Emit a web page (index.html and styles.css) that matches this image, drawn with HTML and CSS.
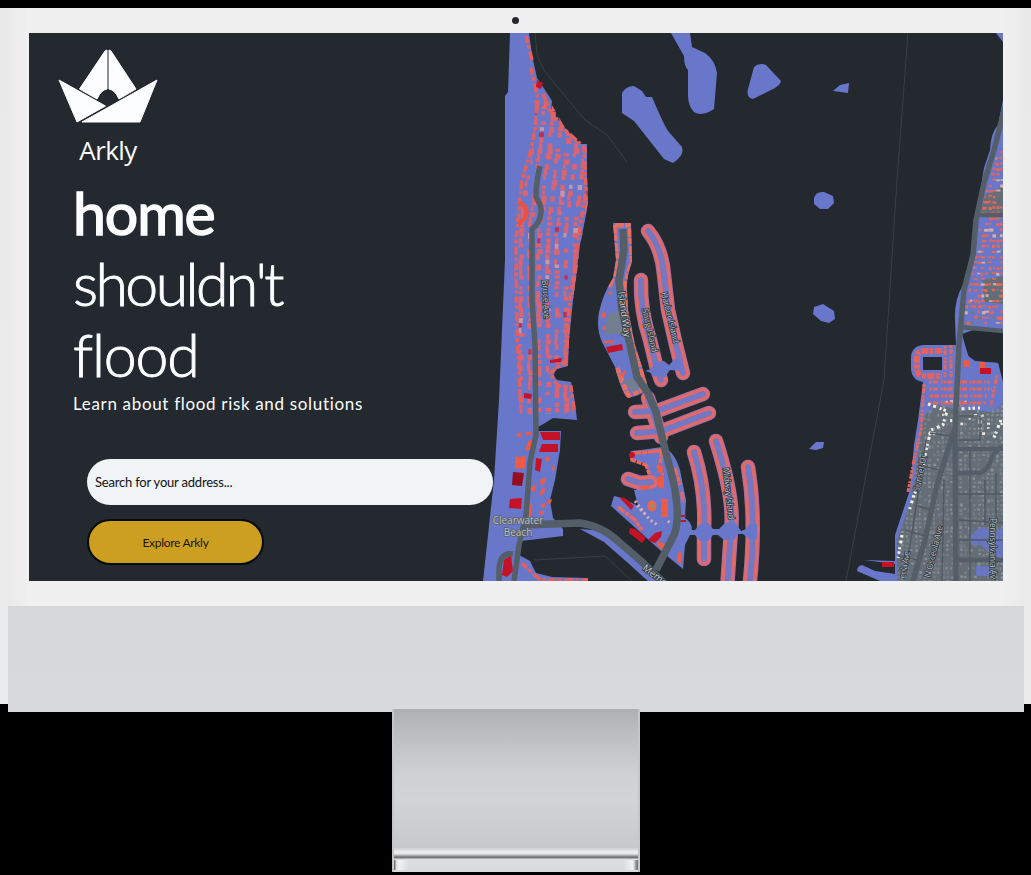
FILE: index.html
```html
<!DOCTYPE html>
<html lang="en">
<head>
<meta charset="utf-8">
<title>Arkly</title>
<link rel="stylesheet" href="styles.css">
</head>
<body>
<main class="desktop">
  <section class="monitor">
    <div class="bezel">
      <span class="camera"></span>
      <div class="screen">
        <svg class="map" viewBox="29 33 974 548" aria-hidden="true">
          <defs>
            <path id="beach" d="M510 33H529L532 55 537 78 545 90 552 101 551 111 565 128 580 144H587V180L588 202 585 220 580 245 573 300 569 340 568 366 557 369Q551 375 557 380L571 382 575 402 577 420 553 418 545 423 538 427V431H561L560 450 555 480 550 500 553 518 563 529V536L521 541 519 555 530 561 536 573 552 577 588 578V581H483L494 480 499 400 502 330 505 260V96L508 92Z"/>
            <path id="town" d="M526 33H529L532 55 537 78 551 103 565 128 580 144H587V180L588 202 583 230 573 300 569 340 567 366 552 370 550 377 556 384 570 385 574 414H520L516 370 514 280 518 205 530 165 535 120 534 80Z"/>
            <path id="isle" d="M613 223H631L632 262 Q626 278 627 290L628 310 635 345 643 370 648 387 Q644 395 628 398Q622 394 615 367L602 342Q596 328 599 312Q603 294 613 278L616 260Z"/>
            <path id="mall" d="M631 451 641 450 662 447Q674 450 680 470L686 500 685 518Q694 524 691 533L685 545 683 569 660 550 611 506 614 496 622 498 638 506 634 490 650 488 650 475 644 463 632 459Z"/>
            <path id="coast" d="M1003 100 998 125 Q991 132 990 150L984 168 978 205 974 235 970 265 963 285 Q954 300 955 320L956 345H942V378L923 382 918 420 914 445 910 490 895 535V561L864 560 895 564V574L875 571 862 565Q857 566 857 571L880 581H1003Z"/>
            <clipPath id="clip-town"><use href="#town"/></clipPath>
            <clipPath id="clip-city"><path d="M958 400H990L1003 405V581H897L898 540 913 494 920 437 928 400Z"/></clipPath>
            <clipPath id="clip-north"><path d="M1003 130 994 165 985 190 978 240 972 275 963 315V326H1003Z"/></clipPath>
            <clipPath id="clip-isle"><use href="#isle"/></clipPath>
            <g id="fingers">
              <path d="M648 231Q662 248 664 275L668 310 676 345 683 373"/>
              <path d="M641 280Q640 310 650 340L656 365 661 380"/>
              <path d="M635 412 657 411 703 394"/>
              <path d="M637 433 662 431 709 413"/>
              <path d="M694 452Q706 490 704 530V559"/>
              <path d="M716 441Q735 500 731 530L727 590"/>
              <path d="M748 467Q757 520 749 590"/>
              <path d="M648 398 661 437"/>
              <path d="M628 479 640 483 651 482"/>
            </g>
          </defs>

          <g class="channel">
            <path d="M535 33 537 55 545 72 585 120 607 135 627 162"/>
            <path d="M908 33 897 180 884 380 846 581"/>
            <path d="M534 560 605 556 632 581"/>
          </g>

          <g class="flood">
            <use href="#beach"/>
            <path d="M671 33H690L692 47 705 53Q715 60 717 73L714 109Q702 117 694 112Q688 106 688 95V70Q684 66 684 56Z"/>
            <path d="M622 93Q626 86 634 86L642 91 646 97H652Q663 123 668 131L682 147Q685 155 673 163L664 159 638 126 634 121 622 113Z"/>
            <path d="M754 67Q759 62 766 65L781 81Q781 84 775 88L753 99Q746 98 748 89Z"/>
            <path d="M833 91 840 85 849 83 848 93Z"/>
            <path d="M814 198Q816 191 824 192L833 196 834 203 828 209H820L814 204Z"/>
            <path d="M814 307 823 304 834 311 835 319 829 323 821 321 813 314Z"/>
            <path d="M809 449 816 442 824 442 823 448 816 450Z"/>
            <path d="M996 33H1003V42Z"/>
            <use href="#isle"/><use href="#mall"/><use href="#coast"/>
            <path d="M580 529 605 531 622 545 650 572 660 583H650L628 563 604 542Z"/>
          </g>

          <g clip-path="url(#clip-town)"><g id="town-homes"></g></g>
          <g class="shore-homes">
            <path d="M526 36 532 60M531 68 537 95 536 125 531 150 522 180 519 210 516 240 517 330 521 410"/>
            <path d="M543 94 550 110 565 130 584 147 586 190 578 240 570 300 566 361 550 373 558 386 571 387 574 410"/>
            <path d="M522 563 532 573 541 580H588"/>
          </g>
          <path class="curve-homes" d="M519 202Q530 208 525 218L519 224"/>

          <g class="severe">
            <path d="M537 80 543 83 541 89 536 87Z"/>
            <path d="M540 432H560V440H543ZM542 444H558V452H539ZM510 499 522 498 521 509 509 508ZM536 458 542 459 540 472 535 470ZM504 560 511 555 513 571 507 577 502 575ZM550 360 562 358 561 362 550 363ZM524 393 532 394 531 399 524 398Z"/>
            <path class="deep" d="M513 472 524 473 522 486 512 485Z"/>
          </g>
          <g class="hot">
            <path d="M515 457 526 456 525 468 515 469ZM528 441 533 440 532 449 525 451ZM517 433H521V437H517ZM526 432H531V435H526ZM530 489 537 483 534 493ZM546 457 549 456V461H546ZM540 480 546 477 545 482 541 486ZM541 489 545 487 544 494 540 496ZM551 464 555 468 553 472ZM528 504 532 503 531 517 528 516ZM541 504 545 503V507L541 508ZM548 500 552 499 551 503 548 504ZM539 512 544 510V514L539 515Z"/>
          </g>

          <use href="#fingers" class="finger-rim"/>
          <use href="#fingers" class="finger-homes"/>
          <use href="#fingers" class="finger-core"/>
          <g class="flood">
            <path d="M645 371 651 369 655 362 664 361 669 365 675 359 681 361 680 371 670 370 665 377 654 376 649 372Z"/>
            <path d="M685 526 691 530H695L700 524 708 523 713 529H719L725 523 735 522 741 531 746 529 749 524H757V539H749L743 534H738L734 540H724L718 535H713L708 541H700L695 535H685Z"/>
          </g>
          <g class="isle-homes" clip-path="url(#clip-isle)">
            <path d="M615 225H630L632 262 624 288 630 330 641 370 646 388 628 396 617 368"/>
            <path d="M614 225 617 265 609 288"/>
          </g>
          <g class="park"><path d="M608 315 620 310 622 334 604 334ZM622 381 635 378 643 385 634 392Z"/></g>
          <g class="hot">
            <path d="M603 313 606 312 604 320ZM601 317 603 311 606 317ZM602 329 605 325 606 330ZM603 341 614 340V343H604ZM607 293 612 291 612 295ZM619 377 626 369 625 375Z"/>
          </g>
          <path class="severe" d="M606 347 622 344 623 350 608 353Z"/>

          <g class="mall-homes">
            <path d="M633 453 650 452 668 449M632 456V460L646 465 650 476"/>
            <path d="M654 451 662 451 660 463M658 465 663 475M675 468 680 485M682 492 683 502M618 507 635 520 642 530"/>
          </g>
          <g class="hot">
            <path d="M661 499H668V517H661ZM658 463 663 467 662 474 658 472ZM657 477 664 475V489L658 487ZM678 553 682 552 681 564 677 561ZM658 541 665 544 662 550 657 545ZM640 487 650 485V489L641 490Z"/>
          </g>
          <g class="severe">
            <path d="M619 497 625 498 634 506 631 510ZM630 528 635 529 646 538 642 543 629 533ZM655 533 662 531 661 537 655 543 648 540ZM679 515H686V517H679ZM679 520H686V522H679Z"/>
            <circle cx="632" cy="455" r="3"/>
          </g>
          <path class="plaza" d="M635 501 649 519 659 526M645 514 637 506M668 521 671 525"/>
          <ellipse class="pond" cx="652" cy="506" rx="3" ry="4"/>

          <g class="land">
            <path d="M923 420 932 403 950 408 990 412 1003 403V581H897V540L912 497Z"/>
            <path d="M1003 186 985 195 980 214H1003ZM983 280 1003 276V304L984 302Z"/>
          </g>
          <g clip-path="url(#clip-city)"><g id="city-homes"></g></g>
          <g clip-path="url(#clip-north)"><g id="north-homes"></g></g>
          <g class="flood">
            <path d="M971 535 980 527 995 531 1003 527V560L990 553 981 545 970 545ZM976 566H993V576H976Z" opacity=".85"/>
            <path d="M926 379H1002V412L990 410 960 395 942 400 928 415 922 400Z" opacity=".5"/>
          </g>
          <path class="sea" d="M962 334 976 329 1003 333V382L998 363 970 361 965 345Z"/>
          <path class="flood" d="M962 345 967 355 975 361 998 363 1003 386V396H960Z"/>
          <g class="finger-rim thin"><path d="M942 351H924Q917 351 917 358V368Q917 376 925 376H942"/></g>
          <g class="finger-homes thin"><path d="M942 351H924Q917 351 917 358V368Q917 376 925 376H942"/></g>
          <g class="rows">
            <path d="M929 382H990M929 389H992M930 396H988M929 403H986"/>
            <path d="M924 384 921 430 914 460 908 492"/>
            <path d="M951 345V377M945 346V377M997 375 991 405"/>
          </g>
          <path class="hot" d="M964 360H970V367H964ZM980 362H985V369H980Z"/>
          <path class="severe" d="M980 368H991V374H980ZM882 562H894V567H882Z"/>
          <path class="white-homes" d="M928 404 947 411 943 425 931 430 926 450 922 475 914 495 909 511M956 409 980 408M980 415V432M902 535 898 558M1001 420 993 440"/>
          <g class="minor-road">
            <path d="M959 416H980V440H959M930 433 950 436M922 466 940 470M959 494H1003M914 505 932 510M905 530 925 536M959 520 1003 523M899 556 918 560M959 540H1003M970 450V581M985 480V525M996 473V520M944 480 942 581M926 440 908 560"/>
          </g>

          <g class="road">
            <path d="M540 166Q536 182 536 197Q542 206 541 213Q540 223 532 229V300L535 345 536 435 530 462 526 515 519 545 514 581"/>
            <path d="M522 525 580 523Q602 526 619 542L641 561 667 586" class="wide"/>
            <path d="M623 229 624 250 619 280 622 310 630 345 637 377 648 393 656 412 664 445 673 480Q681 518 674 535L656 570" class="wide"/>
            <path d="M513 554Q500 552 499 569V583"/>
            <path d="M1005 107 994 150 984 183 976 220 973 255 964 290 959 345 955 430 956 581"/>
            <path d="M954 430 937 485 925 540 912 584"/>
            <path d="M978 215H1003M960 327 1003 331M954 449H1003M956 473H979Q988 471 991 460Q994 450 1003 447M956 560H1003" class="narrow"/>
          </g>

          <g class="labels">
            <text class="label place" x="518" y="524">Clearwater</text>
            <text class="label place" x="518" y="536">Beach</text>
            <text class="label" transform="translate(542 280) rotate(87)" textLength="39">Bruce Ave</text>
            <text class="label large" transform="translate(618 292) rotate(82)" textLength="46">Island Way</text>
            <text class="label" transform="translate(661 293) rotate(76)" textLength="52">Harbor Island</text>
            <text class="label" transform="translate(642 309) rotate(77)" textLength="45">Snug Island</text>
            <text class="label" transform="translate(723 468) rotate(84)" textLength="52">Midway Island</text>
            <text class="label large" transform="translate(642 569) rotate(38)">Memo</text>
            <text class="label" transform="translate(919 492) rotate(-78)" textLength="38">Sunset Dr</text>
            <text class="label" transform="translate(930 578) rotate(-76)" textLength="53">N Osceola Ave</text>
            <text class="label" transform="translate(905 579) rotate(-80)" textLength="28">eola Ave</text>
            <text class="label" transform="translate(990 518) rotate(90)" textLength="61">Pennsylvania Av</text>
          </g>
        </svg>

        <div class="hero">
          <div class="brand">
            <svg class="boat" viewBox="0 0 100 76" aria-hidden="true">
              <g class="sail">
                <path d="M49 2V41Q43 42 39 51L21.500 41 47 3Z"/>
                <path d="M51 2V41Q57 42 61 51L78 41 53 3Z"/>
                <path d="M1 32 47.500 58 19 74Z"/>
                <path d="M99 32 82 74H24Z"/>
              </g>
            </svg>
            <span class="brand-name">Arkly</span>
          </div>
          <h1 class="headline"><b class="strong">home</b><span class="second">shouldn't</span><span class="third">flood</span></h1>
          <p class="tagline">Learn about flood risk and solutions</p>
          <form class="search">
            <input class="address" type="text" placeholder="Search for your address..." aria-label="Address">
            <button class="explore" type="button">Explore Arkly</button>
          </form>
        </div>
      </div>
    </div>
    <div class="chin"></div>
  </section>
  <div class="stand"><div class="neck"></div><div class="foot"></div></div>
</main>
<script src="map.js"></script>
</body>
</html>
```
FILE: styles.css
```css
* { box-sizing: border-box; }
body { margin: 0; background: #000; font-family: Lato, "Open Sans", sans-serif; }
.desktop { width: 1031px; height: 875px; padding-top: 8px; overflow: hidden; display: flex; flex-direction: column; align-items: center; }
.monitor { width: 1031px; height: 704px; flex: none; padding: 0 7px 0 8px; background: linear-gradient(#e9e9e9, #ececec) top / 100% 696px no-repeat; }
.bezel { height: 598px; padding: 0 21px; display: flex; flex-direction: column; align-items: center; background: linear-gradient(90deg, #e9e9e9, #f0f0f0 2%, #f0f0f0 98%, #e9e9e9); }
.camera { width: 7px; height: 7px; margin: 9px 1px 9px 0; border-radius: 50%; background: #22292f; flex: none; }
.screen { width: 974px; height: 548px; flex: none; display: grid; background: #23292f; overflow: hidden; }
.chin { height: 106px; background: linear-gradient(#d5d7d8, #d9dadb); }
.map, .hero { grid-area: 1 / 1; }
.map { width: 974px; height: 548px; display: block; }

.hero { z-index: 1; width: 480px; height: 548px; padding: 15px 0 0 29px; display: flex; flex-direction: column; align-items: flex-start; color: #fbfdff; }
.brand { display: flex; flex-direction: column; align-items: center; width: 100px; height: 135px; flex: none; }
.boat { width: 100px; height: 76px; display: block; }
.sail { fill: #fbfdff; stroke: #fbfdff; stroke-width: 1; stroke-linejoin: round; }
.brand-name { margin-top: 9px; font-family: "Open Sans", sans-serif; font-size: 26px; line-height: 34px; letter-spacing: -0.6px; }
.headline { margin: -6px 0 0 15px; display: flex; flex-direction: column; font-size: 59px; line-height: 71px; font-weight: 300; }
.strong { font-weight: 400; letter-spacing: -1.1px; -webkit-text-stroke: 1.5px #fbfdff; }
.second { letter-spacing: -2.6px; -webkit-text-stroke: 0.9px #fbfdff; }
.third { letter-spacing: -1.2px; -webkit-text-stroke: 0.9px #fbfdff; }
.tagline { margin: 2px 0 0 15px; font-size: 17px; line-height: 24px; letter-spacing: 0.67px; white-space: nowrap; }
.search { margin: 43px 0 0 29px; display: flex; flex-direction: column; align-items: flex-start; gap: 14px; }
.address { width: 406px; height: 46px; padding: 0 8px; border: 0; border-radius: 23px; background: #f0f4f6; font: 13px Lato, sans-serif; letter-spacing: -0.2px; color: #111; }
.address::placeholder { color: #111; opacity: 1; }
.explore { width: 177px; height: 46px; padding: 0; border: 2px solid #080b0d; border-radius: 23px; background: #cd9f20; color: #17140c; font: 12px Lato, sans-serif; letter-spacing: -0.3px; }

.stand { width: 248px; height: 163px; margin: -3px 0 0 1px; flex: none; border: solid #c5c6c7; border-width: 0 2px; }
.neck { height: 139px; background: linear-gradient(#aeb0b1, #bebfc1 20%, #cfd0d1 46%, #d3d4d5 65%, #c7c8c9); }
.foot { height: 24px; background:
  linear-gradient(90deg, #777a7b 0 1px, #d9dadb 2px, #f2f2f2 5px, transparent 15px calc(100% - 15px), #f2f2f2 calc(100% - 5px), #777a7b calc(100% - 1px)) 0 12px / 100% 10px no-repeat,
  linear-gradient(#cdcecf, #eeeeef 4px, #e3e4e5 6px, #707273 9px, #777a7b 10px, #dddedf 11px, #d9dadb); }

.channel { fill: none; stroke: #454947; stroke-width: .7; }
.flood { fill: #6977ca; }
.sea { fill: #23292f; }
.severe { fill: #c51226; }
.deep { fill: #980c20; }
.hot { fill: #ed5a45; }
.land { fill: #656e77; }
.park { fill: #747e91; }
.pond { fill: #85927d; stroke: #ed6848; stroke-width: 3; }
.shore-homes { fill: none; stroke: #e55f5d; stroke-width: 3.5; stroke-dasharray: 7 2 4 3 9 2 3 3; }
.curve-homes { fill: none; stroke: #ef513c; stroke-width: 4; }
.isle-homes { fill: none; stroke: #e86e62; stroke-width: 5; stroke-dasharray: 9 1 6 2; }
.mall-homes { fill: none; stroke: #e86861; stroke-width: 3.5; stroke-dasharray: 8 1 5 1; }
.plaza { fill: none; stroke: #d9afb0; stroke-width: 3; stroke-dasharray: 2 3; }
.finger-rim, .finger-homes, .finger-core { fill: none; stroke-linecap: round; stroke-linejoin: round; }
.finger-rim { stroke: #a370a5; stroke-width: 14.5; }
.finger-homes { stroke: #e3686a; stroke-width: 12.5; }
.finger-core { stroke: #7478c2; stroke-width: 6; }
.thin.finger-rim { stroke: #6977ca; stroke-width: 12; stroke-linecap: butt; }
.thin.finger-homes { stroke: #e26260; stroke-width: 6; stroke-linecap: butt; stroke-dasharray: 7 1.5 4 1; }
.rows { fill: none; stroke: #e7655b; stroke-width: 3; stroke-dasharray: 3 1 5 2.5 2 1; }
.white-homes { fill: none; stroke: #f2f3ee; stroke-width: 3; stroke-dasharray: 2.5 3 3 4 2 2; }
.minor-road { fill: none; stroke: #4f5962; stroke-width: 1.5; }
.road { fill: none; stroke: #535e68; stroke-width: 5.5; stroke-linejoin: round; }
.road .wide { stroke-width: 7.5; }
.road .narrow { stroke-width: 4.5; }
.label { font: 8.5px "Open Sans", sans-serif; fill: #b9bec3; stroke: #303840; stroke-width: 1.6; paint-order: stroke; }
.label.large { font-size: 9.5px; fill: #cbd0d4; }
.label.place { font-size: 10px; text-anchor: middle; fill: #b9bdc0; stroke: #59626d; }
```
FILE: map.js
```js
// Fills a map area with small building footprints laid out in street rows.
function seeded(seed) {
  return () => (seed = (seed * 16807) % 2147483647) / 2147483647;
}

function addBuildings(id, o) {
  const rand = seeded(o.seed);
  const group = document.getElementById(id);
  for (let y = o.y0; y < o.y1; y += o.dy) {
    for (let x = o.x0; x < o.x1; x += o.dx) {
      if (rand() < o.gap) continue;
      const r = document.createElementNS("http://www.w3.org/2000/svg", "rect");
      const bend = o.bend ? o.bend(y) : 0;
      r.setAttribute("x", (x + bend + rand() * 1.5).toFixed(1));
      r.setAttribute("y", (y + rand()).toFixed(1));
      r.setAttribute("width", (o.w * (0.6 + rand() * 0.6)).toFixed(1));
      r.setAttribute("height", (o.h * (0.6 + rand() * 0.6)).toFixed(1));
      r.setAttribute("fill", o.colors(x, y, rand));
      group.append(r);
    }
  }
}

addBuildings("town-homes", {
  seed: 71, x0: 500, x1: 610, y0: 100, y1: 416, dx: 9, dy: 5.3, w: 4.6, h: 5.4, gap: 0.22,
  bend: y => (y < 230 ? (230 - y) * 0.12 : 0),
  colors: (x, y, r) => r() < 0.02 ? "#c72c49" : r() < 0.07 ? "#c995a8" : "#dc6470"
});
addBuildings("city-homes", {
  seed: 19, x0: 896, x1: 1003, y0: 400, y1: 581, dx: 4.5, dy: 4.5, w: 2.7, h: 2.7, gap: 0.25,
  colors: (x, y, r) => y < 436 && r() < 0.12 ? "#e9e5df" : r() < 0.6 ? "#767f87" : "#868e94"
});
addBuildings("north-homes", {
  seed: 43, x0: 962, x1: 1003, y0: 140, y1: 326, dx: 3.7, dy: 5.5, w: 4, h: 2.6, gap: 0.25,
  colors: (x, y, r) => r() < 0.15 ? "#d6afa8" : r() < 0.15 ? "#73798c" : "#e2675c"
});
```
